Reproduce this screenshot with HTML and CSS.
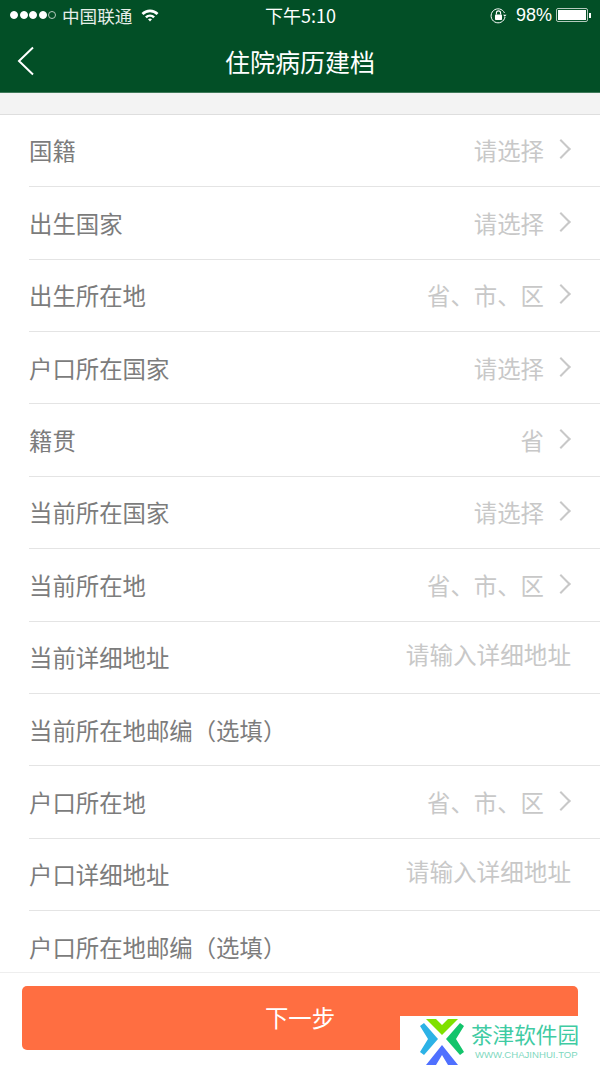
FILE: index.html
```html
<!DOCTYPE html>
<html>
    <head>
        <meta charset="utf-8">
        <title>住院病历建档</title>
        <link rel="stylesheet" href="styles.css">
    </head>
    <body>
        <div class="page">
            <div class="header">
                <div class="statusBar">
                    <div class="statusLeft">
                        <span class="signal"><i></i><i></i><i></i><i></i><i class="empty"></i></span>
                        <span class="carrier">中国联通</span>
                        <svg class="wifi" width="18" height="14" viewBox="0 0 18 14">
                            <path d="M0.5 5 A12 12 0 0 1 17.5 5 L15.6 7 A9.4 9.4 0 0 0 2.4 7 Z" fill="#fff"/>
                            <path d="M4 8.4 A7.2 7.2 0 0 1 14 8.4 L12.2 10.2 A4.8 4.8 0 0 0 5.8 10.2 Z" fill="#fff"/>
                            <path d="M7 11.3 A3 3 0 0 1 11 11.3 L9 13.4 Z" fill="#fff"/>
                        </svg>
                    </div>
                    <div class="clock">下午5:10</div>
                    <div class="statusRight">
                        <svg class="lock" width="17" height="17" viewBox="0 0 17 17">
                            <path d="M14.5 6 A7 7 0 1 0 15 10" fill="none" stroke="#fff" stroke-width="1"/>
                            <path d="M13 7.8 L16.6 7.8 L14.8 9.8 Z" fill="#fff"/>
                            <rect x="5" y="7.5" width="7" height="5.5" rx="0.8" fill="#fff"/>
                            <path d="M6.4 7.5 V6 A2.1 2.1 0 0 1 10.6 6 V7.5" fill="none" stroke="#fff" stroke-width="1.1"/>
                        </svg>
                        <span class="percent">98%</span>
                        <span class="battery"><span class="batteryFill"></span></span>
                        <span class="batteryTip"></span>
                    </div>
                </div>
                <div class="navBar">
                    <svg class="backIcon" width="18" height="30" viewBox="0 0 18 30">
                        <path d="M16 1.5 L2 15 L16 28.5" fill="none" stroke="#fff" stroke-width="2"/>
                    </svg>
                    <h4 class="navTitle">住院病历建档</h4>
                </div>
            </div>
            <div class="gap"></div>
            <div class="formList">
                <div class="row"><span class="label">国籍</span><span class="value">请选择</span><span class="arrow"></span></div>
                <div class="row"><span class="label">出生国家</span><span class="value">请选择</span><span class="arrow"></span></div>
                <div class="row"><span class="label">出生所在地</span><span class="value">省、市、区</span><span class="arrow"></span></div>
                <div class="row"><span class="label">户口所在国家</span><span class="value">请选择</span><span class="arrow"></span></div>
                <div class="row"><span class="label">籍贯</span><span class="value">省</span><span class="arrow"></span></div>
                <div class="row"><span class="label">当前所在国家</span><span class="value">请选择</span><span class="arrow"></span></div>
                <div class="row"><span class="label">当前所在地</span><span class="value">省、市、区</span><span class="arrow"></span></div>
                <div class="row"><span class="label">当前详细地址</span><span class="value inputHint">请输入详细地址</span></div>
                <div class="row"><span class="label">当前所在地邮编（选填）</span></div>
                <div class="row"><span class="label">户口所在地</span><span class="value">省、市、区</span><span class="arrow"></span></div>
                <div class="row"><span class="label">户口详细地址</span><span class="value inputHint">请输入详细地址</span></div>
                <div class="row"><span class="label">户口所在地邮编（选填）</span></div>
            </div>
            <div class="footer">
                <div class="nextBtn">下一步</div>
            </div>
            <div class="watermark">
                <svg class="markLogo" width="44" height="48" viewBox="0 0 44 48">
                    <path d="M6 1 H16 L22 7 L28 1 H38 L22 17 Z" fill="#7fe000"/>
                    <path d="M44 8 L40 5 L26 21 L40 37 L44 34 L36 21 Z" fill="#12c46b"/>
                    <path d="M0 8 L4 5 L18 21 L4 37 L0 34 L8 21 Z" fill="#2cb2e6"/>
                    <path d="M22 27 L38 47 H28 L22 37 L16 47 H6 Z" fill="#4f70ff"/>
                </svg>
                <div class="markText">
                    <div class="markName">茶津软件园</div>
                    <div class="markUrl">WWW.CHAJINHUI.TOP</div>
                </div>
            </div>
        </div>
    </body>
</html>
```

FILE: styles.css
```css
html, body{
    margin:0;
    padding:0;
    background:white;
}
.page{
    position:relative;
    width:600px;
    height:1066px;
    overflow:hidden;
    display:flex;
    flex-direction:column;
    font-family:"Noto Sans CJK SC","Liberation Sans",sans-serif;
}
.header{
    background:#024f26;
    height:92px;
    border-bottom:1px solid #3f7a5a;
    color:white;
    flex:none;
}
.statusBar{
    height:30px;
    display:flex;
    align-items:center;
    justify-content:space-between;
    padding:0 9px 0 10px;
    font-size:17.6px;
}
.statusLeft, .statusRight{
    width:200px;
    display:flex;
    align-items:center;
}
.statusRight{
    justify-content:flex-end;
}
.signal{
    display:flex;
    gap:1.5px;
}
.signal i{
    width:8px;
    height:8px;
    border-radius:50%;
    background:white;
    border:1px solid white;
    box-sizing:border-box;
}
.signal i.empty{
    background:none;
    border-color:#b5cabd;
}
.carrier{
    margin-left:6px;
    color:#e6eee9;
}
.wifi{
    margin-left:9px;
}
.clock{
    font-size:18px;
}
.lock{
    margin-right:9px;
}
.percent{
    font-family:"Liberation Sans",sans-serif;
    font-size:18px;
    margin-right:4px;
}
.battery{
    width:32px;
    height:14px;
    border:1px solid #b5cabd;
    border-radius:2px;
    padding:1px;
    box-sizing:border-box;
    display:flex;
}
.batteryFill{
    flex:1;
    background:white;
}
.batteryTip{
    width:2px;
    height:5px;
    background:white;
    margin-left:1px;
}
.navBar{
    height:62px;
    position:relative;
    display:flex;
    align-items:center;
    justify-content:center;
}
.backIcon{
    position:absolute;
    left:17px;
    top:16px;
}
.navTitle{
    margin:0;
    font-size:25px;
    font-weight:normal;
    color:white;
}
.gap{
    height:20.8px;
    background:#f3f3f3;
    border-bottom:1px solid #dedede;
    flex:none;
}
.formList{
    height:857.2px;
    overflow:hidden;
    flex:none;
}
.row{
    height:72.4px;
    box-sizing:border-box;
    margin-left:29px;
    padding-right:29px;
    border-bottom:1px solid #e4e4e4;
    display:flex;
    align-items:center;
    justify-content:space-between;
    font-size:23.4px;
}
.label{
    color:#7c7c7c;
    margin-right:auto;
}
.value{
    color:#c8c8c8;
}
.inputHint{
    font-size:23.6px;
    margin-top:-7px;
}
.arrow{
    width:12px;
    height:12px;
    border-top:2px solid #c8c8c8;
    border-right:2px solid #c8c8c8;
    transform:rotate(45deg);
    margin:-2px 3px 0 10px;
    box-sizing:content-box;
}
.footer{
    flex:1;
    border-top:1px solid #eeeeee;
    padding:13px 22px 0 22px;
}
.nextBtn{
    height:64px;
    background:#ff6e41;
    border-radius:5px;
    color:white;
    font-size:23.4px;
    display:flex;
    align-items:center;
    justify-content:center;
    padding-bottom:2px;
    box-sizing:border-box;
}
.watermark{
    position:absolute;
    left:400px;
    top:1016px;
    width:200px;
    height:50px;
    background:white;
    display:flex;
}
.markLogo{
    margin:2px 0 0 20px;
    flex:none;
}
.markText{
    margin-left:7px;
}
.markName{
    font-size:21.6px;
    line-height:26px;
    margin-top:5px;
    color:#3fcba3;
    white-space:nowrap;
}
.markUrl{
    font-family:"Liberation Sans",sans-serif;
    font-size:9.6px;
    line-height:12px;
    margin-top:2px;
    padding-left:4px;
    color:#7fd8c0;
    white-space:nowrap;
}
```
